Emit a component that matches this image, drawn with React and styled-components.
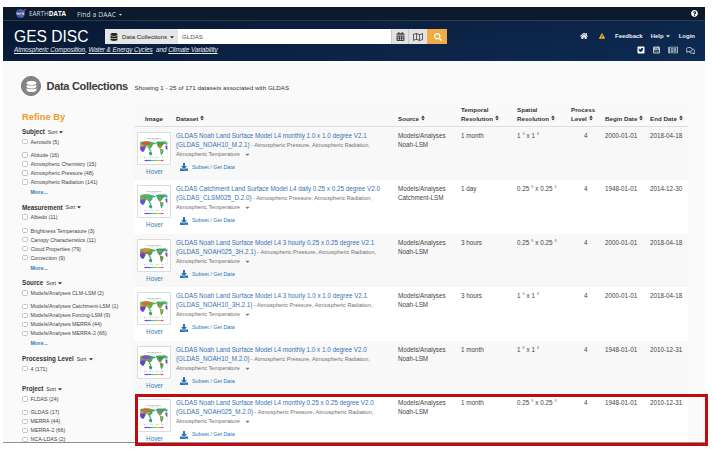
import React from "react";
import styled, { createGlobalStyle } from "styled-components";
import {
  FaDatabase, FaCalendarAlt, FaRegMap, FaSearch, FaHome, FaExclamationTriangle,
  FaTwitterSquare, FaRegNewspaper, FaRegComments, FaQuestionCircle,
  FaDownload, FaSort, FaCaretDown,
} from "react-icons/fa";

const Global = createGlobalStyle`
  * { box-sizing: border-box; }
  body { margin: 0; background: #fff; font-family: "Liberation Sans", Arial, sans-serif; overflow: hidden; }
  svg { display: block; flex: none; }
`;

const Stage = styled.div`
  position: relative;
  width: 712px;
  height: 450px;
  padding: 7px 0 0 3px;
`;

const Page = styled.div`
  width: 702px;
  height: 436px;
  overflow: hidden;
  background: #fafafa;
  border-bottom: 1px solid #8d9196;
  color: #333;
`;

const TopBar = styled.div`
  height: 14px;
  display: flex;
  align-items: center;
  padding: 0 7px 0 12px;
  background: #0b1a2d;
  border-bottom: 1px solid #2c3a4b;
  color: #d9dee4;
  font-family: "Open Sans", sans-serif;
`;

const Brand = styled.span`
  margin-left: 3px;
  width: 48px;
  font-size: 6.4px;
  white-space: nowrap;
  b { font-weight: 700; color: #fff; }
`;

const Daac = styled.span`
  display: flex;
  align-items: center;
  gap: 2px;
  flex: 1;
  padding-top: 1px;
  font-size: 6.7px;
  letter-spacing: 0.1px;
`;

const Header = styled.header`
  height: 40px;
  display: flex;
  padding: 8px 10px 0 11px;
  background: linear-gradient(172deg, #071730 0%, #0b2143 45%, #0e2b53 100%);
  color: #fff;
`;

const HeaderMain = styled.div`
  width: 433px;
`;

const SearchLine = styled.div`
  display: flex;
  height: 15px;
`;

const SiteName = styled.div`
  width: 91px;
  font-size: 15.6px;
  line-height: 15px;
  white-space: nowrap;
`;

const ScopeButton = styled.div`
  width: 73px;
  display: flex;
  align-items: center;
  gap: 4px;
  padding-left: 5px;
  background: #e6e6e6;
  color: #222;
  font-size: 6.2px;
  white-space: nowrap;
  svg:last-child { margin-left: -2px; }
`;

const SearchInput = styled.div`
  flex: 1;
  padding-left: 4px;
  background: #fff;
  color: #555;
  font-size: 6.2px;
  line-height: 15px;
`;

const ToolButton = styled.div`
  width: ${(p) => p.$width}px;
  display: flex;
  align-items: center;
  justify-content: center;
  background: ${(p) => (p.$primary ? "#f0ab45" : "#e2e2e2")};
  border-left: 1px solid ${(p) => (p.$primary ? "#f0ab45" : "#c9c9c9")};
  color: ${(p) => (p.$primary ? "#fff" : "#444")};
`;

const Tagline = styled.div`
  margin-top: 2px;
  font-size: 6.4px;
  line-height: 8px;
  font-style: italic;
  white-space: pre;
  letter-spacing: -0.08px;
  color: #e6ebf2;
  u { text-underline-offset: 1px; text-decoration-thickness: 0.6px; }
`;

const HeaderSide = styled.div`
  flex: 1;
  display: flex;
  flex-direction: column;
  align-items: flex-end;
`;

const NavRow = styled.nav`
  height: 14px;
  display: flex;
  align-items: center;
  font-size: 6px;
  font-weight: 700;
  color: #e9eef4;
`;

const NavItem = styled.span`
  display: flex;
  align-items: center;
  gap: 1px;
  margin-left: ${(p) => p.$gap}px;
  color: ${(p) => p.$color || "inherit"};
`;

const SocialRow = styled.div`
  height: 14px;
  display: flex;
  align-items: center;
  gap: 8px;
  color: #b9c3cf;
`;

const Heading = styled.div`
  height: 39px;
  padding: 11px 0 0 18px;
  display: flex;
  align-items: center;
`;

const Badge = styled.div`
  width: 20px;
  height: 20px;
  border-radius: 50%;
  display: flex;
  align-items: center;
  justify-content: center;
  background: #858585;
  border: 1px solid #747474;
  color: #fff;
`;

const PageTitle = styled.h1`
  margin: 0 0 0 5.5px;
  width: 87px;
  font-size: 11px;
  font-weight: 700;
  letter-spacing: -0.3px;
  color: #3a3a3a;
  white-space: nowrap;
`;

const Summary = styled.div`
  margin-top: 3px;
  padding-left: 1px;
  font-size: 6.2px;
  letter-spacing: 0.05px;
  color: #333;
  white-space: nowrap;
`;

const Columns = styled.div`
  display: flex;
`;

const Sidebar = styled.aside`
  width: 131px;
  padding: 11px 0 0 19px;
`;

const RefineTitle = styled.h2`
  margin: 0;
  height: 15.5px;
  font-size: 9.4px;
  line-height: 12px;
  font-weight: 700;
  color: #f0982a;
`;

const Group = styled.section`
  margin-bottom: ${(p) => p.$after}px;
`;

const GroupTitle = styled.div`
  height: 10px;
  display: flex;
  align-items: center;
  font-size: 6.3px;
  font-weight: 700;
  color: #333;
  white-space: nowrap;
`;

const SortLabel = styled.span`
  display: flex;
  align-items: center;
  gap: 1px;
  margin-left: 3px;
  font-size: 5.3px;
  font-weight: 400;
`;

const Option = styled.div`
  height: ${(p) => (p.$first ? 10 : 9)}px;
  margin-bottom: ${(p) => (p.$first ? 4 : 0)}px;
  display: flex;
  align-items: center;
  gap: 3px;
  font-size: 5.3px;
  color: #444;
  white-space: nowrap;
`;

const Check = styled.span`
  width: 5.5px;
  height: 5.5px;
  background: #fff;
  border: 1px solid #c2c2c2;
  border-radius: 1.5px;
`;

const More = styled.div`
  margin-top: 1.5px;
  height: 9px;
  padding-left: 8.5px;
  font-size: 5.4px;
  line-height: 9px;
  font-weight: 700;
  color: #337ab7;
`;

const Table = styled.div`
  width: 554px;
  background: #f9f9f9;
`;

const grid = `
  display: grid;
  grid-template-columns: 42px 222px 63px 56px 54px 34px 45px 38px;
`;

const HeadRow = styled.div`
  ${grid}
  height: 26.5px;
  align-items: end;
  padding-bottom: 3px;
  border-bottom: 1px solid #dedede;
  font-size: 6.2px;
  line-height: 9px;
  font-weight: 700;
  color: #333;
  white-space: nowrap;
`;

const HeadCell = styled.div`
  padding-left: ${(p) => p.$indent || 0}px;
  span { display: flex; align-items: center; gap: 1px; }
`;

const DataRow = styled.div`
  ${grid}
  height: 53.6px;
  padding-top: 4px;
  background: ${(p) => (p.$striped ? "#f8f8f8" : "#fff")};
  font-size: 6.3px;
  line-height: 9px;
  color: #444;
  white-space: nowrap;
`;

const Cell = styled.div`
  padding-left: ${(p) => p.$indent || 0}px;
`;

const ThumbCard = styled.div`
  width: 35px;
  margin-left: 3px;
  padding-top: 1px;
  text-align: center;
  color: #337ab7;
  font-size: 6.3px;
`;

const Thumb = styled.div`
  width: 34px;
  height: 33px;
  border: 1px solid #dcdcdc;
  border-radius: 1px;
  background: #fff;
  margin-bottom: 2px;
`;

const Title = styled.div`
  color: #3673b3;
`;

const Keywords = styled.span`
  font-size: 5.6px;
  color: #707070;
`;

const KeywordLine = styled.div`
  height: 9px;
  display: flex;
  align-items: center;
  gap: 4px;
  color: #777;
`;

const Subset = styled.div`
  margin: 4px 0 0 4px;
  height: 9px;
  display: flex;
  align-items: center;
  gap: 4px;
  font-size: 5.4px;
  color: #2a74b8;
`;

const Highlight = styled.div`
  position: absolute;
  left: 135px;
  top: 394px;
  width: 573px;
  height: 52px;
  border: 3px solid #c20a10;
`;

const NasaLogo = () => (
  <svg width="11" height="11" viewBox="0 0 22 22">
    <circle cx="11" cy="11" r="9" fill="#2463b8" />
    <path d="M2 10 Q10 14 21 2 Q16 10 15 18 Q12 14 2 10" fill="none" stroke="#e0483e" strokeWidth="1.500" />
    <path d="M4.500 13V9.500l3 3.500V9.500M9.500 13l1.500-3.500 1.500 3.500M17.500 9.500h-2.500v1.700h2.300V13h-2.500" fill="none" stroke="#fff" strokeWidth="1.200" />
  </svg>
);

const YouTubeSquare = () => (
  <svg width="7" height="8" viewBox="0 0 14 16">
    <rect x="0" y="1" width="14" height="14" rx="2.500" fill="currentColor" />
    <rect x="2.500" y="8" width="9" height="5" rx="1" fill="#0d2749" />
    <path d="M4.500 3l1 2v1.800M6.500 3l-1 2M8 4v2.500h1.500V4" fill="none" stroke="#0d2749" strokeWidth="0.900" />
    <path d="M4 9.500h2M5 9.500v2.500M7.500 9v3h2v-1.800h-2" fill="none" stroke="currentColor" strokeWidth="0.800" />
  </svg>
);

const palettes = [
  ["#e2502d", "#7b3fd6", "#3cb371", "#e8a33a", "#4aa13c"],
  ["#5fae4b", "#5a58d8", "#33b58a", "#e58a35", "#3f9f5a"],
  ["#e08a38", "#6a3fd0", "#45a85a", "#d8582f", "#2f9f80"],
  ["#e2662e", "#7038d8", "#58b04a", "#e0a030", "#3fae78"],
  ["#8a4ad8", "#5048d8", "#3fa86a", "#e2762e", "#46a03c"],
  ["#e0642e", "#6a3fd8", "#3fae6a", "#e89a34", "#3d9f70"],
];

const WorldMap = ({ colors: [a, b, c, d, e] }) => (
  <svg width="32" height="31" viewBox="0 0 32 31">
    <path d="M9 5.500h14" stroke="#aaa" strokeWidth="0.700" strokeDasharray="2 .5" />
    <path d="M12 6.800h8" stroke="#ccc" strokeWidth="0.500" />
    <rect x="2.200" y="8" width="27" height="16" fill="none" stroke="#e4e4e4" strokeWidth="0.500" />
    <path d="M2.300 9.200l4-.9 5 .3 4.500.8 2.200.9-1.700 1.200-1.400-.2-.6 2.200-1.800 1.700-1.300 1-1.400-2-1.500-.4-1 1.300-1 3-1.800.8-2.200-3z" fill={c} />
    <path d="M4 9.600l4-1 4.500.4-.6 2.200-3 .8-4.500-.2z" fill={a} />
    <path d="M2.300 13.400l4.200-.2.800 2-2 3.500-1.700-.4-1.300-2z" fill={b} />
    <path d="M8 12.300l3.500-.4-.6 2.200-2 .2z" fill={d} />
    <path d="M2.300 11.500l3.500.2-.5 1.600-3 .1z" fill={d} />
    <path d="M10.500 15.600l1.800 1 1.500 1.800-1.900-.2z" fill={e} />
    <path d="M10.800 19.300l2-.9 1.600 1.900-.8 2.300-2.200-.5z" fill={c} />
    <path d="M12 19.800l1.600.3-.5 1.400z" fill={b} />
    <path d="M17.500 9.200l3.500-.8 4.200.3 1.600 1.600-2 1.900-1.500 2.400-1.600.8-2.200-2.400-.6-2.200z" fill={e} />
    <path d="M18 9.500l2.700-.2.400 2-1.800.5z" fill={c} />
    <path d="M20.500 10.500l3 .2-.8 2.400-1.800-.4z" fill={a} />
    <path d="M20.800 12.600l2-.2-.6 2z" fill={d} />
    <path d="M24.500 8.500l3.200-.3.300 2-2 1z" fill={c} />
    <path d="M21.700 15.300l3.900 1.500-.5 2.700-1.600 3.200-1.100-2.600z" fill={c} />
    <path d="M22.500 16.300l2.200 1-1 2-1-1z" fill={d} />
    <path d="M27.300 12.500l2 .3v4.300l-1.500-1.200z" fill={b} />
    <path d="M27 9.700l2.300-.6v2.600l-1.800-.3z" fill={c} />
    <path d="M6 24.500h3m3 0h3m3 0h3m3 0h2" stroke="#888" strokeWidth="0.500" strokeDasharray="1 1.500" />
    <path d="M6.500 27.500h3.500" stroke="#7c3fe0" strokeWidth="1.200" />
    <path d="M10 27.500h3" stroke="#5a6ae0" strokeWidth="1.200" />
    <path d="M13 27.500h3" stroke="#4ec0b0" strokeWidth="1.200" />
    <path d="M16 27.500h3.500" stroke="#7cc860" strokeWidth="1.200" />
    <path d="M19.500 27.500h3" stroke="#eda040" strokeWidth="1.200" />
    <path d="M22.500 27.500h3" stroke="#e0507a" strokeWidth="1.200" />
  </svg>
);

const groups = [
  { title: "Subject", after: 5.2, more: true, options: ["Aerosols (5)", "Altitude (16)", "Atmospheric Chemistry (15)", "Atmospheric Pressure (48)", "Atmospheric Radiation (141)"] },
  { title: "Measurement", after: 5.2, more: true, options: ["Albedo (11)", "Brightness Temperature (3)", "Canopy Characteristics (11)", "Cloud Properties (79)", "Convection (9)"] },
  { title: "Source", after: 5.2, more: true, options: ["Models/Analyses CLM-LSM (2)", "Models/Analyses Catchment-LSM (1)", "Models/Analyses Forcing-LSM (9)", "Models/Analyses MERRA (44)", "Models/Analyses MERRA-2 (66)"] },
  { title: "Processing Level", after: 10.4, options: ["4 (171)"] },
  { title: "Project", after: 0, options: ["FLDAS (24)", "GLDAS (17)", "MERRA (44)", "MERRA-2 (66)", "NCA-LDAS (2)"] },
];

const rows = [
  ["GLDAS Noah Land Surface Model L4 monthly 1.0 x 1.0 degree V2.1", "(GLDAS_NOAH10_M.2.1)", "Noah-LSM", "1 month", "1 ° x 1 °", "2000-01-01", "2018-04-18"],
  ["GLDAS Catchment Land Surface Model L4 daily 0.25 x 0.25 degree V2.0", "(GLDAS_CLSM025_D.2.0)", "Catchment-LSM", "1 day", "0.25 ° x 0.25 °", "1948-01-01", "2014-12-30"],
  ["GLDAS Noah Land Surface Model L4 3 hourly 0.25 x 0.25 degree V2.1", "(GLDAS_NOAH025_3H.2.1)", "Noah-LSM", "3 hours", "0.25 ° x 0.25 °", "2000-01-01", "2018-04-18"],
  ["GLDAS Noah Land Surface Model L4 3 hourly 1.0 x 1.0 degree V2.1", "(GLDAS_NOAH10_3H.2.1)", "Noah-LSM", "3 hours", "1 ° x 1 °", "2000-01-01", "2018-04-18"],
  ["GLDAS Noah Land Surface Model L4 monthly 1.0 x 1.0 degree V2.0", "(GLDAS_NOAH10_M.2.0)", "Noah-LSM", "1 month", "1 ° x 1 °", "1948-01-01", "2010-12-31"],
  ["GLDAS Noah Land Surface Model L4 monthly 0.25 x 0.25 degree V2.0", "(GLDAS_NOAH025_M.2.0)", "Noah-LSM", "1 month", "0.25 ° x 0.25 °", "1948-01-01", "2010-12-31"],
];

const SortHead = ({ top, children }) => (
  <HeadCell>
    {top}
    <span>{children} <FaSort size={6} /></span>
  </HeadCell>
);

export default function App() {
  return (
    <Stage>
      <Global />
      <Page>
        <TopBar>
          <NasaLogo />
          <Brand>EARTH<b>DATA</b></Brand>
          <Daac>Find a DAAC <FaCaretDown size={5} /></Daac>
          <FaQuestionCircle size={7} color="#fff" />
        </TopBar>
        <Header>
          <HeaderMain>
            <SearchLine>
              <SiteName>GES DISC</SiteName>
              <ScopeButton>
                <FaDatabase size={8} />Data Collections<FaCaretDown size={6} />
              </ScopeButton>
              <SearchInput>GLDAS</SearchInput>
              <ToolButton $width={17}><FaCalendarAlt size={9} /></ToolButton>
              <ToolButton $width={19}><FaRegMap size={10} /></ToolButton>
              <ToolButton $width={20} $primary><FaSearch size={8} /></ToolButton>
            </SearchLine>
            <Tagline>
              <u>Atmospheric Composition</u>{", "}<u>Water &amp; Energy Cycles</u>{"  and "}<u>Climate Variability</u>
            </Tagline>
          </HeaderMain>
          <HeaderSide>
            <NavRow>
              <NavItem><FaHome size={8} /></NavItem>
              <NavItem $gap={11} $color="#f5b324"><FaExclamationTriangle size={6} /></NavItem>
              <NavItem $gap={10}>Feedback</NavItem>
              <NavItem $gap={8}>Help<FaCaretDown size={6} /></NavItem>
              <NavItem $gap={8}>Login</NavItem>
            </NavRow>
            <SocialRow>
              <FaTwitterSquare size={8} color="#fff" />
              <YouTubeSquare />
              <FaRegNewspaper size={10} />
              <FaRegComments size={9} />
            </SocialRow>
          </HeaderSide>
        </Header>
        <Heading>
          <Badge><FaDatabase size={11} /></Badge>
          <PageTitle>Data Collections</PageTitle>
          <Summary>Showing 1 - 25 of 171 datasets associated with GLDAS</Summary>
        </Heading>
        <Columns>
          <Sidebar>
            <RefineTitle>Refine By</RefineTitle>
            {groups.map((g) => (
              <Group key={g.title} $after={g.after}>
                <GroupTitle>
                  {g.title}
                  <SortLabel>Sort<FaCaretDown size={6} /></SortLabel>
                </GroupTitle>
                {g.options.map((o, i) => (
                  <Option key={o} $first={i === 0}><Check />{o}</Option>
                ))}
                {g.more && <More>More...</More>}
              </Group>
            ))}
          </Sidebar>
          <Table>
            <HeadRow>
              <HeadCell $indent={11}>Image</HeadCell>
              <SortHead>Dataset</SortHead>
              <SortHead>Source</SortHead>
              <SortHead top="Temporal">Resolution</SortHead>
              <SortHead top="Spatial">Resolution</SortHead>
              <SortHead top="Process">Level</SortHead>
              <SortHead>Begin Date</SortHead>
              <SortHead>End Date</SortHead>
            </HeadRow>
            {rows.map(([title, id, model, temporal, spatial, begin, end], i) => (
              <DataRow key={id} $striped={i % 2 === 0}>
                <ThumbCard>
                  <Thumb><WorldMap colors={palettes[i]} /></Thumb>
                  Hover
                </ThumbCard>
                <Cell>
                  <Title>{title}</Title>
                  <Title>{id}<Keywords> - Atmospheric Pressure, Atmospheric Radiation,</Keywords></Title>
                  <KeywordLine><Keywords>Atmospheric Temperature</Keywords><FaCaretDown size={7} /></KeywordLine>
                  <Subset><FaDownload size={8} />Subset / Get Data</Subset>
                </Cell>
                <Cell>Models/Analyses<br />{model}</Cell>
                <Cell>{temporal}</Cell>
                <Cell>{spatial}</Cell>
                <Cell $indent={13}>4</Cell>
                <Cell>{begin}</Cell>
                <Cell>{end}</Cell>
              </DataRow>
            ))}
          </Table>
        </Columns>
      </Page>
      <Highlight />
    </Stage>
  );
}
